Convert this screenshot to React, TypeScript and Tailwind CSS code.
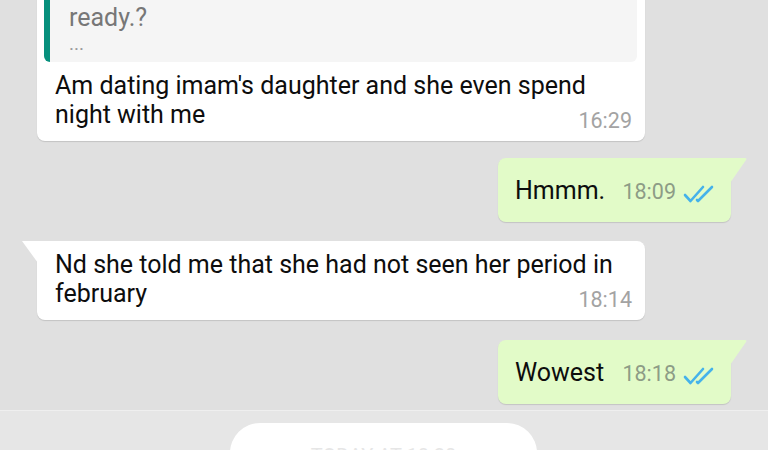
import React from "react";

function Ticks() {
  return (
    <svg width="33" height="18" viewBox="0 0 33 18" fill="none" stroke="#45b2ea" strokeWidth="2.6" strokeLinecap="round" strokeLinejoin="round">
      <path d="M2 10 L7.5 16 L20 2" />
      <path d="M14 15 L15 16 L29 2" />
    </svg>
  );
}

function WhiteTail() {
  return (
    <svg className="absolute -left-[15px] top-0" width="16" height="22" viewBox="0 0 16 22">
      <path d="M0 0 L16 0 L16 22 Z" fill="#ffffff" />
    </svg>
  );
}

function GreenTail() {
  return (
    <svg className="absolute -right-[16px] top-0" width="17" height="25" viewBox="0 0 17 25">
      <path d="M0 0 L15 0 Q17 0 16 2 L0 25 Z" fill="#e2fbc8" />
    </svg>
  );
}

function Outgoing({ text, time }: { text: string; time: string }) {
  return (
    <div className="relative self-end mr-[37px] w-[233px] h-[64px] rounded-[8px] rounded-tr-none bg-[#e2fbc8] shadow-[0_1px_1px_rgba(0,0,0,0.13)] flex items-center pl-[17px] pr-[15px]">
      <GreenTail />
      <span className="text-[25px] leading-[29px] text-[#0d0d0d]">{text}</span>
      <span className="ml-auto text-[21.5px] leading-[24px] text-[#8d9c86] mt-[4px]">{time}</span>
      <span className="ml-[7px] mt-[8px] flex">
        <Ticks />
      </span>
    </div>
  );
}

export default function App() {
  return (
    <div
      className="w-[768px] h-[450px] overflow-hidden bg-[#e0e0e0] flex flex-col"
      style={{ fontFamily: "Roboto, 'Noto Sans', sans-serif" }}
    >
      <div className="h-[410px] shrink-0 flex flex-col">
        {/* Bubble 1 (cut at top) */}
        <div className="relative ml-[37px] w-[608px] -mt-[40px] rounded-[8px] bg-white shadow-[0_1px_1px_rgba(0,0,0,0.13)] pt-[7px] pb-[8px] flex flex-col">
          <div className="ml-[7px] mr-[8px] rounded-[6px] bg-[#f5f5f5] border-l-[6px] border-[#07907d] pl-[19px] pt-[6px] pb-[7px] flex flex-col">
            <span className="text-[25px] leading-[30px] text-[#777]">Are we</span>
            <span className="text-[25px] leading-[30px] text-[#777]">ready.?</span>
            <span className="text-[19px] leading-[22px] text-[#9a9a9a]">...</span>
          </div>
          <p className="mt-[9px] pl-[18px] pr-[14px] text-[25px] leading-[29px] text-[#0d0d0d]">
            Am dating imam's daughter and she even spend night with me
          </p>
          <div className="-mt-[20px] flex justify-end pr-[13px]">
            <span className="text-[21.5px] leading-[24px] text-[#a3a3a3]">16:29</span>
          </div>
        </div>

        <div className="mt-[17px] flex flex-col">
          <Outgoing text="Hmmm." time="18:09" />
        </div>

        {/* Bubble 3 */}
        <div className="relative mt-[19px] ml-[37px] w-[608px] rounded-[8px] rounded-tl-none bg-white shadow-[0_1px_1px_rgba(0,0,0,0.13)] pt-[9px] pb-[8px] flex flex-col">
          <WhiteTail />
          <p className="pl-[18px] pr-[14px] text-[25px] leading-[29px] text-[#0d0d0d]">
            Nd she told me that she had not seen her period in february
          </p>
          <div className="-mt-[20px] flex justify-end pr-[13px]">
            <span className="text-[21.5px] leading-[24px] text-[#a3a3a3]">18:14</span>
          </div>
        </div>

        <div className="mt-[20px] flex flex-col">
          <Outgoing text="Wowest" time="18:18" />
        </div>
      </div>

      <div className="h-[1px] shrink-0 bg-[#efefef]" />
      <div className="flex-1 min-h-0 overflow-hidden bg-[#e6e6e6] flex justify-center">
        <div className="mt-[12px] ml-[-1px] w-[307px] h-[60px] shrink-0 rounded-[30px] bg-white flex justify-center pt-[21px]">
          <span className="text-[20px] leading-[24px] text-[#e6e6e6]">TODAY AT 18:20</span>
        </div>
      </div>
    </div>
  );
}
